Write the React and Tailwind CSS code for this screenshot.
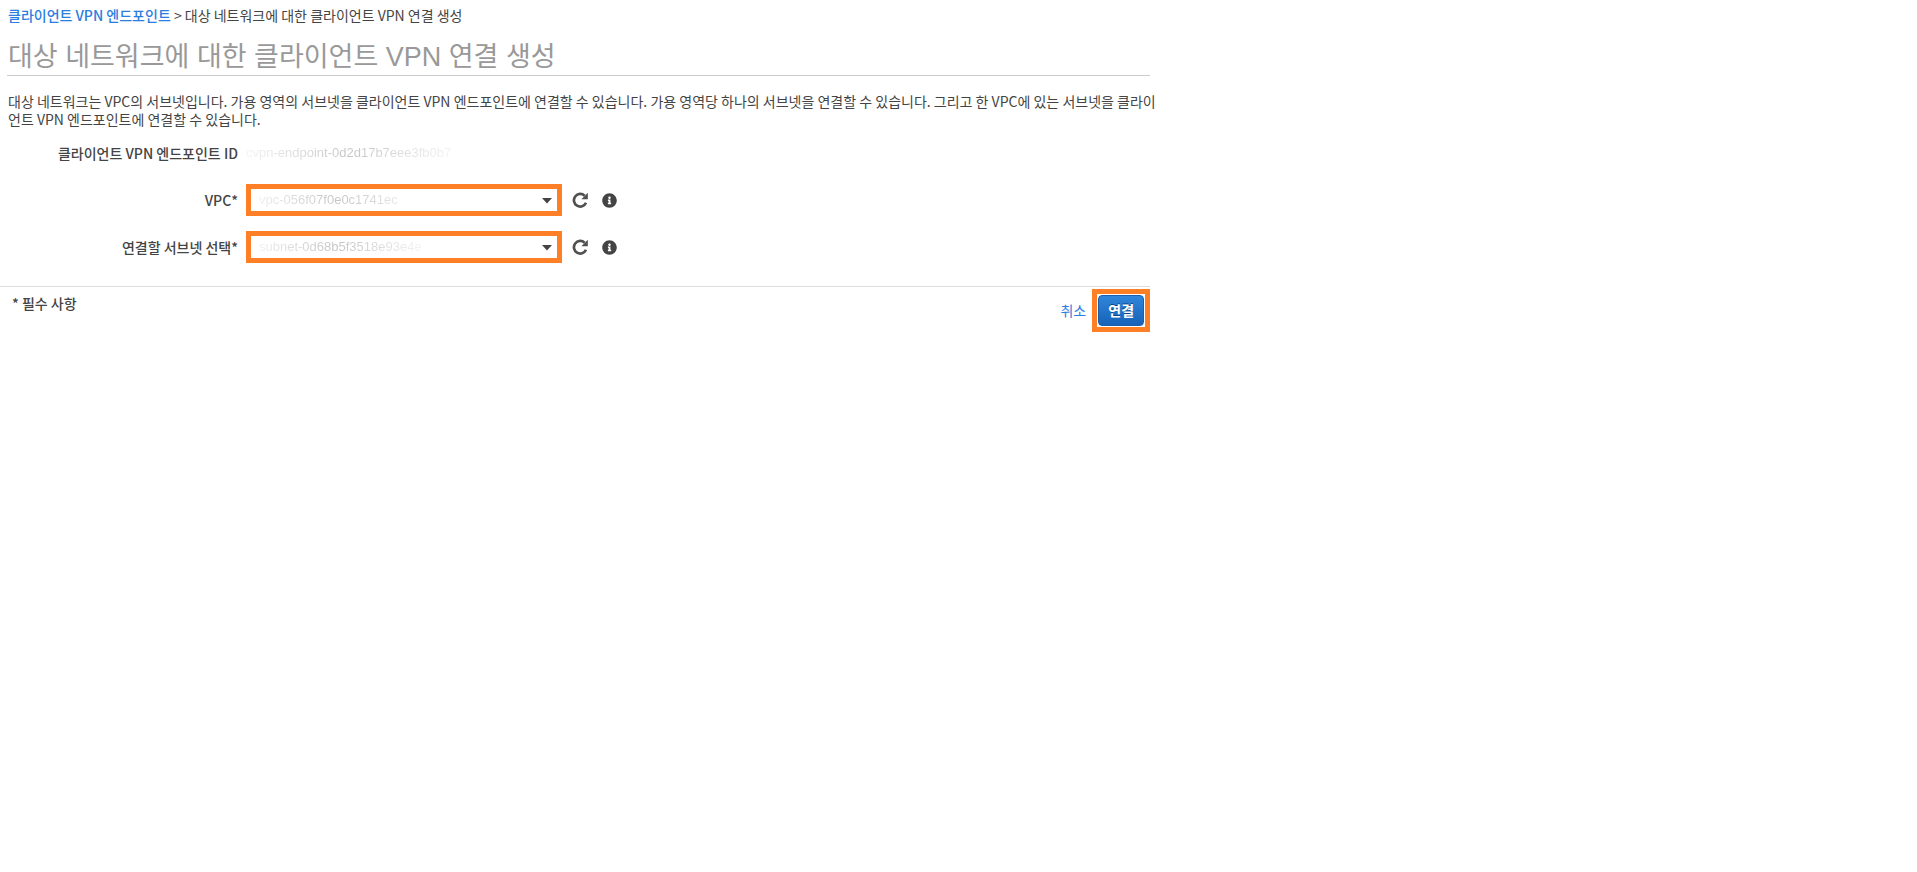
import { FaInfoCircle } from 'react-icons/fa';

const FIELDS = [
  { id: 'vpc', label: 'VPC*', value: 'vpc-056f07f0e0c1741ec' },
  { id: 'subnet', label: '연결할 서브넷 선택*', value: 'subnet-0d68b5f3518e93e4e' },
];

const RefreshIcon = () => (
  <svg viewBox="0 0 16 16" className="size-4" fill="none" aria-hidden="true">
    <path d="M14 10.8A6.3 6.3 0 1 1 12.6 3.7" stroke="#505050" strokeWidth="2.7" />
    <path d="M15.8 .8v6.4H9.4z" fill="#505050" />
  </svg>
);

const SelectField = ({ id, label, value }) => (
  <div className="flex items-center h-8">
    <label htmlFor={id} className="w-[238px] shrink-0 text-right text-[14px] font-medium">
      {label}
    </label>
    <div className="relative ml-2 w-[316px] h-8 border-5 border-[#ff7f27]">
      <select
        id={id}
        defaultValue={value}
        className="block w-full h-full appearance-none bg-linear-to-r from-gray-100 via-[#c4c4c4] to-gray-100 bg-[length:170px_100%] bg-no-repeat bg-clip-text px-2 font-['Liberation_Sans',sans-serif] text-[13px] text-transparent outline-none"
      >
        <option value={value}>{value}</option>
      </select>
      <svg viewBox="0 0 10 6" className="absolute right-[5px] top-[9px] w-[10px] h-[6px] pointer-events-none" aria-hidden="true">
        <path d="M0 0h10L5 5.5z" fill="#444" />
      </svg>
    </div>
    <button type="button" aria-label="새로 고침" className="ml-[10px] cursor-pointer">
      <RefreshIcon />
    </button>
    <button type="button" aria-label="정보" className="ml-[14px] cursor-pointer">
      <FaInfoCircle className="size-[15px] text-[#444]" />
    </button>
  </div>
);

const App = () => {
  return (
    <main className="w-3/5 bg-white text-[#444] font-['Noto_Sans_CJK_KR',sans-serif]">
      <nav className="px-2 pt-[6px] text-[14px] leading-[18px]">
        <a href="#endpoints" className="font-medium text-[#2a7de1]">클라이언트 VPN 엔드포인트</a>
        {' > '}
        <span>대상 네트워크에 대한 클라이언트 VPN 연결 생성</span>
      </nav>

      <h1 className="ml-[7px] mt-4 pl-px border-b border-[#ccc] font-['Liberation_Sans','Noto_Sans_CJK_KR',sans-serif] text-[27px] leading-[35px] text-[#999]">
        대상 네트워크에 대한 클라이언트 VPN 연결 생성
      </h1>

      <p className="pl-2 -mr-4 mt-4 text-[14px] leading-[18px] break-all">
        대상 네트워크는 VPC의 서브넷입니다. 가용 영역의 서브넷을 클라이언트 VPN 엔드포인트에 연결할 수 있습니다.
        가용 영역당 하나의 서브넷을 연결할 수 있습니다. 그리고 한 VPC에 있는 서브넷을 클라이언트 VPN 엔드포인트에 연결할 수 있습니다.
      </p>

      <form onSubmit={e => e.preventDefault()}>
        <div className="flex flex-col gap-[15px] mt-[9px] pb-[23px]">
          <div className="flex items-center h-8">
            <span className="w-[238px] shrink-0 text-right text-[14px] font-medium">
              클라이언트 VPN 엔드포인트 ID
            </span>
            <span className="ml-2 bg-linear-to-r from-gray-100 via-[#c4c4c4] to-gray-100 bg-clip-text font-['Liberation_Sans',sans-serif] text-[13px] text-transparent">
              cvpn-endpoint-0d2d17b7eee3fb0b7
            </span>
          </div>
          {FIELDS.map(field => (
            <SelectField key={field.id} {...field} />
          ))}
        </div>

        <div className="flex items-start justify-between border-t border-[#ddd] pl-3 pt-[2px]">
          <span className="mt-[5px] text-[14px] leading-[18px] font-medium">* 필수 사항</span>
          <div className="flex items-center">
            <a href="#cancel" className="mr-[6px] text-[14px] text-[#2a7de1]">취소</a>
            <div className="border-5 border-[#ff7f27] p-[1px]">
              <button
                type="submit"
                className="block w-[46px] h-[31px] rounded-[4px] border border-[#1a5fae] bg-linear-to-b from-[#2f86dc] to-[#1663b8] text-[14px] font-bold text-white text-shadow-[0_-1px_0_#0d458a] cursor-pointer"
              >
                연결
              </button>
            </div>
          </div>
        </div>
      </form>
    </main>
  );
};

export default App;
